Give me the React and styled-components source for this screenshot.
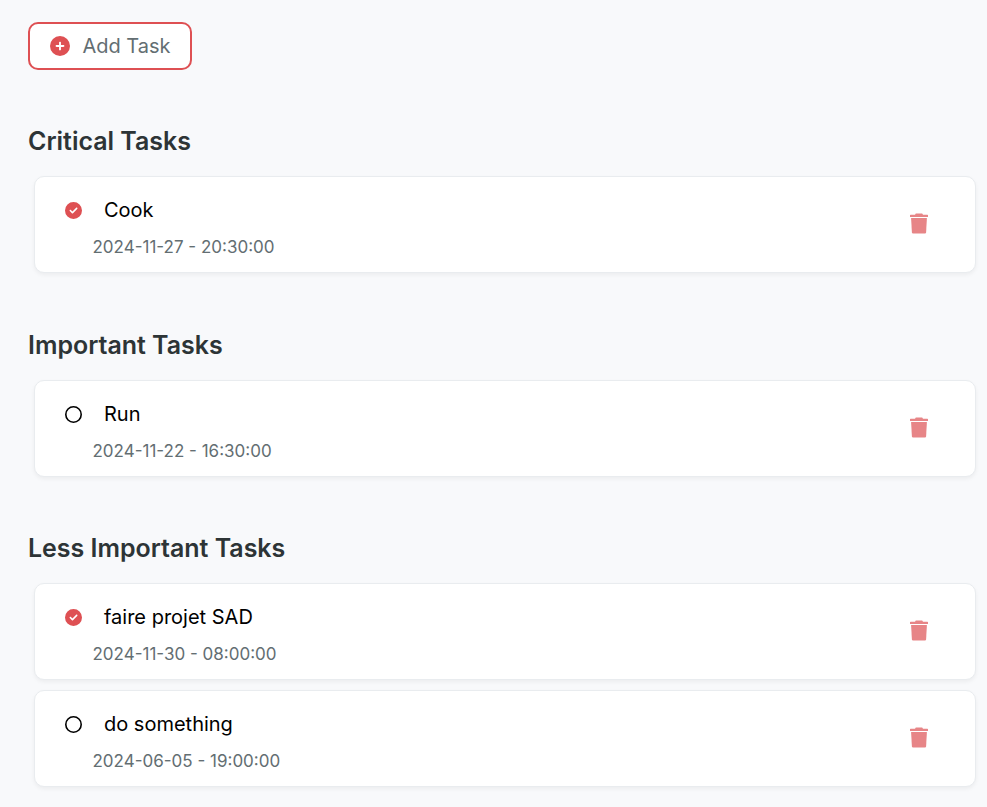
import React from "react";
import styled, { createGlobalStyle } from "styled-components";
import { FaCircleCheck, FaRegCircle, FaCirclePlus } from "react-icons/fa6";

const GlobalStyle = createGlobalStyle`
  * { box-sizing: border-box; }
  body { margin: 0; background: #f8f9fb; font-family: Inter, sans-serif; overflow: hidden; }
`;

const Page = styled.main`
  height: 807px;
  padding: 22px 11.5px 0 28px;
`;

const AddButton = styled.button`
  display: flex;
  align-items: center;
  gap: 12.4px;
  width: 164px;
  height: 48px;
  padding: 0 20px;
  border: 2px solid #de5053;
  border-radius: 10px;
  background: #fff;
  color: #636e72;
  font: 400 20px/24px Inter, sans-serif;
  white-space: nowrap;
  svg { color: #de5053; flex: none; margin-top: -1px; }
`;

const Section = styled.section`
  padding-top: 57.2px;
`;

const Heading = styled.h2`
  margin: 0 0 19.3px;
  color: #2d3436;
  font-size: 24.96px;
  line-height: 29.9px;
  font-weight: 600;
`;

const List = styled.div`
  display: grid;
  gap: 10px;
  padding-left: 6px;
`;

const Card = styled.article`
  display: flex;
  align-items: center;
  justify-content: space-between;
  height: 97px;
  padding: 0 46.5px 0 30px;
  border: 1px solid #e9ecef;
  border-radius: 10px;
  background: #fff;
  box-shadow: 0 2px 4px rgba(0, 0, 0, 0.05);
`;

const TitleRow = styled.div`
  display: flex;
  align-items: center;
  gap: 22px;
  margin-top: 5.6px;
  font-size: 20px;
  line-height: 24px;
  color: #000;
  svg { color: ${(p) => (p.$done ? "#de5053" : "#000")}; margin-top: 1px; }
`;

const DateText = styled.div`
  margin: 15px 0 0 27.5px;
  color: #636e72;
  font-size: 17px;
  line-height: 20px;
`;

const DeleteButton = styled.button`
  display: flex;
  margin-top: -2px;
  padding: 0;
  border: 0;
  background: none;
  color: #e78587;
`;

const TrashIcon = () => (
  <svg width="18" height="21" viewBox="0 0 18 21" fill="currentColor" aria-hidden="true">
    <path d="M5 1.7 5.8.4h6.4l.8 1.3h4.4q.6 0 .6.6v1.6H0V2.3q0-.6.6-.6Z" />
    <path d="M1.1 5h15.8l-.8 14.5q-.1 1.1-1.2 1.1H3.1q-1.1 0-1.2-1.1Z" />
  </svg>
);

const groups = [
  { name: "Critical Tasks", tasks: [["Cook", "2024-11-27 - 20:30:00", true]] },
  { name: "Important Tasks", tasks: [["Run", "2024-11-22 - 16:30:00", false]] },
  {
    name: "Less Important Tasks",
    tasks: [
      ["faire projet SAD", "2024-11-30 - 08:00:00", true],
      ["do something", "2024-06-05 - 19:00:00", false],
    ],
  },
];

export default function App() {
  return (
    <Page>
      <GlobalStyle />
      <AddButton><FaCirclePlus size={20} />Add Task</AddButton>
      {groups.map((g) => (
        <Section key={g.name}>
          <Heading>{g.name}</Heading>
          <List>
            {g.tasks.map(([title, date, done]) => (
              <Card key={title}>
                <div>
                  <TitleRow $done={done}>
                    {done ? <FaCircleCheck size={17} /> : <FaRegCircle size={17} />}
                    {title}
                  </TitleRow>
                  <DateText>{date}</DateText>
                </div>
                <DeleteButton aria-label={`Delete ${title}`}><TrashIcon /></DeleteButton>
              </Card>
            ))}
          </List>
        </Section>
      ))}
    </Page>
  );
}
